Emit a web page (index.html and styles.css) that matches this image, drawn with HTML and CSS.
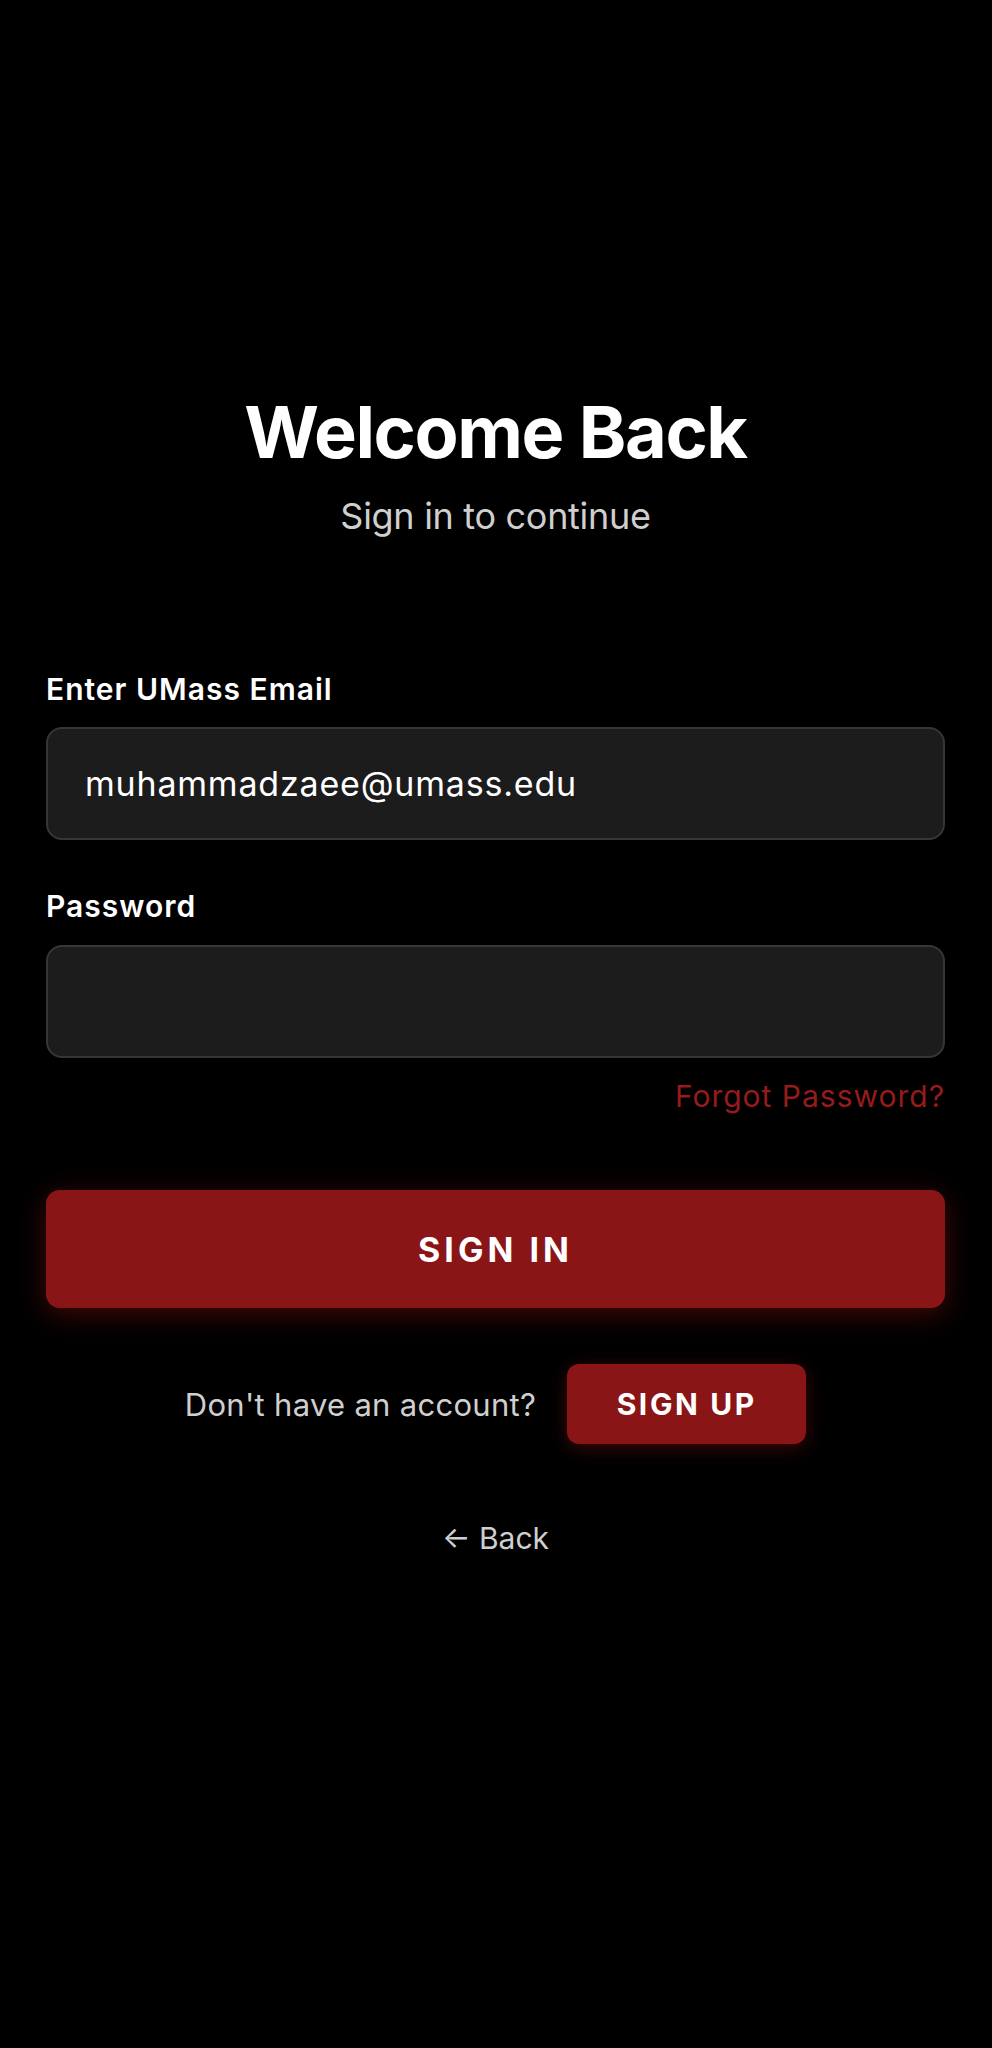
FILE: index.html
```html
<!DOCTYPE html>
<html lang="en">
<head>
    <meta charset="UTF-8">
    <meta name="viewport" content="width=device-width, initial-scale=1.0">
    <title>Sign In</title>
    <link rel="stylesheet" href="styles.css">
</head>
<body>
    <main class="login">
        <header class="login-head">
            <h1 class="title">Welcome Back</h1>
            <p class="subtitle">Sign in to continue</p>
        </header>

        <form class="login-form">
            <label class="field-label" for="email">Enter UMass Email</label>
            <input class="field-input" type="email" id="email" value="muhammadzaee@umass.edu">

            <label class="field-label pw-label" for="password">Password</label>
            <input class="field-input" type="password" id="password">

            <div class="forgot-row"><a href="#" class="forgot">Forgot Password?</a></div>

            <button type="button" class="btn-signin">SIGN IN</button>
        </form>

        <div class="signup-row">
            <span class="signup-text">Don't have an account?</span>
            <button type="button" class="btn-signup">SIGN UP</button>
        </div>

        <div class="back-row"><a href="#" class="back">&larr; Back</a></div>
    </main>
</body>
</html>
```

FILE: styles.css
```css
body {
    margin: 0;
    background-color: #000;
    font-family: Inter, "Noto Sans", sans-serif;
    color: #fff;
}
.login {
    padding: 388px 47px 0 46px;
}
.login-head {
    text-align: center;
}
.title {
    margin: 0;
    font-size: 72px;
    line-height: 88px;
    font-weight: 700;
    letter-spacing: -1.4px;
}
.subtitle {
    margin: 18px 0 0;
    font-size: 36px;
    line-height: 44px;
    color: #cfcfcf;
    letter-spacing: -0.3px;
}
.login-form {
    display: flex;
    flex-direction: column;
    margin-top: 133px;
}
.field-label {
    font-size: 30px;
    line-height: 36px;
    font-weight: 600;
    letter-spacing: 1px;
    margin-bottom: 20px;
}
.pw-label {
    margin-top: 48px;
    margin-bottom: 21px;
}
.field-input {
    box-sizing: border-box;
    height: 113px;
    padding: 0 37px;
    background-color: #1c1c1c;
    border: 2px solid #363636;
    border-radius: 16px;
    color: #fff;
    font-family: inherit;
    font-size: 34px;
    letter-spacing: 0.8px;
    outline: none;
}
.forgot-row {
    text-align: right;
    margin-top: 20px;
    line-height: 36px;
}
.forgot {
    font-size: 30px;
    letter-spacing: 1px;
    color: #961b1b;
    text-decoration: none;
}
.btn-signin {
    margin-top: 71px;
    height: 118px;
    border: none;
    border-radius: 14px;
    background-color: #8a1516;
    color: #fff;
    font-family: inherit;
    font-size: 34px;
    font-weight: 700;
    letter-spacing: 4px;
    box-shadow: 0 6px 28px rgba(150, 20, 20, 0.45);
    cursor: pointer;
}
.signup-row {
    display: flex;
    justify-content: center;
    align-items: center;
    gap: 31px;
    margin-top: 56px;
}
.signup-text {
    font-size: 31px;
    letter-spacing: 0.3px;
    color: #cfcfcf;
}
.btn-signup {
    width: 239px;
    height: 80px;
    border: none;
    border-radius: 12px;
    background-color: #8a1516;
    color: #fff;
    font-family: inherit;
    font-size: 30px;
    font-weight: 700;
    letter-spacing: 2.6px;
    box-shadow: 0 4px 18px rgba(150, 20, 20, 0.4);
    cursor: pointer;
}
.back-row {
    text-align: center;
    margin-top: 76px;
}
.back {
    font-size: 30px;
    line-height: 36px;
    color: #cfcfcf;
    text-decoration: none;
}
```
